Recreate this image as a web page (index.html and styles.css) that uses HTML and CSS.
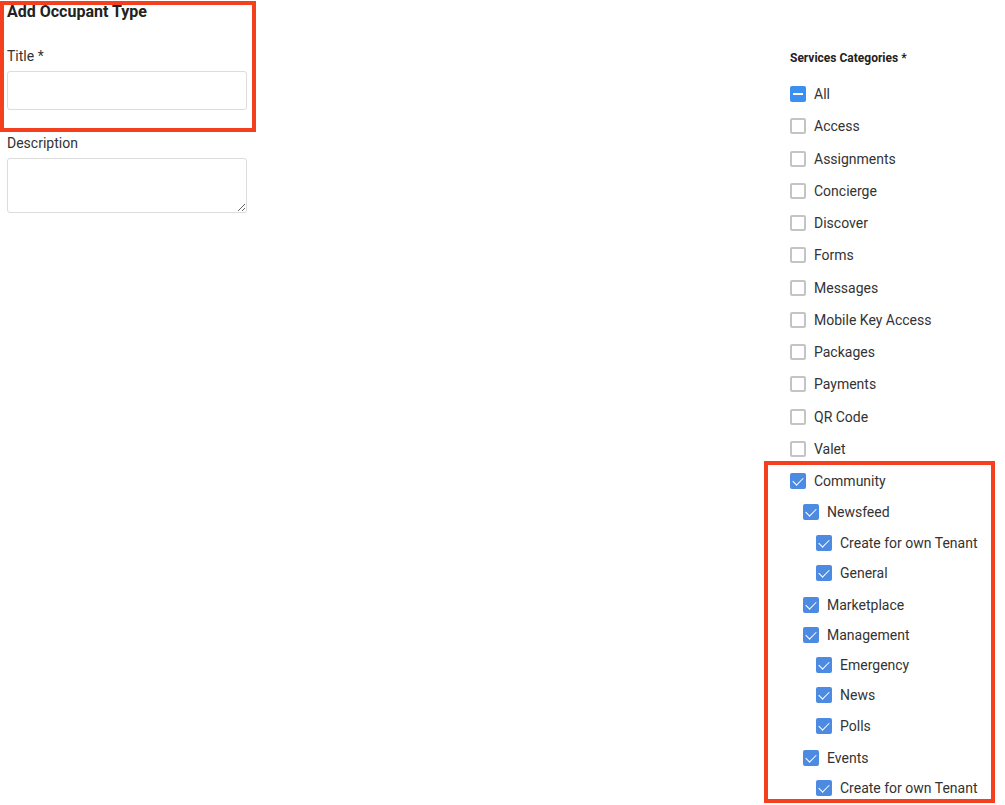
FILE: index.html
```html
<!DOCTYPE html>
<html lang="en">
<head>
    <meta charset="UTF-8">
    <meta name="viewport" content="width=device-width, initial-scale=1.0">
    <title>Add Occupant Type</title>
    <link rel="stylesheet" href="styles.css">
</head>
<body>
    <div class="page">
        <div class="form">
            <h1 class="title">Add Occupant Type</h1>
            <label class="field-label">Title *</label>
            <input type="text" class="input">
            <label class="field-label desc-label">Description</label>
            <textarea class="textarea"></textarea>
        </div>

        <div class="services">
            <div class="services-title">Services Categories *</div>
            <ul class="tree">
                <li class="row"><span class="box partial"></span>All</li>
                <li class="row"><span class="box"></span>Access</li>
                <li class="row"><span class="box"></span>Assignments</li>
                <li class="row"><span class="box"></span>Concierge</li>
                <li class="row"><span class="box"></span>Discover</li>
                <li class="row"><span class="box"></span>Forms</li>
                <li class="row"><span class="box"></span>Messages</li>
                <li class="row"><span class="box"></span>Mobile Key Access</li>
                <li class="row"><span class="box"></span>Packages</li>
                <li class="row"><span class="box"></span>Payments</li>
                <li class="row"><span class="box"></span>QR Code</li>
                <li class="row"><span class="box"></span>Valet</li>
                <li class="row"><span class="box checked"></span>Community</li>
                <li>
                    <ul class="sub">
                        <li class="row sm"><span class="box checked"></span>Newsfeed</li>
                        <li>
                            <ul class="sub">
                                <li class="row sm"><span class="box checked"></span>Create for own Tenant</li>
                                <li class="row sm"><span class="box checked"></span>General</li>
                            </ul>
                        </li>
                        <li class="row sm"><span class="box checked"></span>Marketplace</li>
                        <li class="row sm"><span class="box checked"></span>Management</li>
                        <li>
                            <ul class="sub">
                                <li class="row sm"><span class="box checked"></span>Emergency</li>
                                <li class="row sm"><span class="box checked"></span>News</li>
                                <li class="row sm"><span class="box checked"></span>Polls</li>
                            </ul>
                        </li>
                        <li class="row sm"><span class="box checked"></span>Events</li>
                        <li>
                            <ul class="sub">
                                <li class="row sm"><span class="box checked"></span>Create for own Tenant</li>
                            </ul>
                        </li>
                    </ul>
                </li>
            </ul>
        </div>
    </div>

    <!-- annotation frames -->
    <div class="mark mark-form"></div>
    <div class="mark mark-community"></div>
</body>
</html>
```

FILE: styles.css
```css
* {
  margin: 0px;
  padding: 0px;
  box-sizing: border-box;
}

body {
  font-family: Roboto, "Liberation Sans", sans-serif;
  font-size: 14px;
  color: #333;
  background: #fff;
  position: relative;
  height: 805px;
  overflow: hidden;
}

.page {
  display: flex;
  padding-left: 7px;
}

.form {
  width: 240px;
  display: flex;
  flex-direction: column;
}

.title {
  font-size: 16px;
  font-weight: 700;
  color: #222;
  line-height: 18px;
  margin-top: 3px;
}

.field-label {
  line-height: 18px;
  margin-top: 26px;
  margin-bottom: 6px;
}

.desc-label {
  margin-top: 24px;
  margin-bottom: 6px;
}

.input {
  height: 39px;
  width: 240px;
  border: 1px solid #dcdcdc;
  border-radius: 3px;
}

.textarea {
  height: 55px;
  width: 240px;
  border: 1px solid #dcdcdc;
  border-radius: 3px;
  resize: vertical;
}

.services {
  margin-left: auto;
  width: 215px;
  padding-top: 51px;
}

.services-title {
  font-size: 12px;
  font-weight: 700;
  color: #222;
  line-height: 14px;
  margin-bottom: 13px;
}

.tree,
.sub {
  list-style: none;
}

.sub {
  padding-left: 13px;
  margin-bottom: 2px;
}

.row {
  display: flex;
  align-items: center;
  gap: 8px;
  height: 32.25px;
}

.row.sm {
  height: 30.2px;
}

.box {
  width: 16px;
  height: 16px;
  border: 2px solid #c4c4c4;
  border-radius: 2px;
  background: #fff;
  flex-shrink: 0;
  position: relative;
}

.box.checked {
  border: none;
  background: #4d8be3;
}

.box.checked::after {
  content: "";
  position: absolute;
  left: 5px;
  top: 2px;
  width: 5px;
  height: 9px;
  border-right: 1.5px solid #fff;
  border-bottom: 1.5px solid #fff;
  transform: rotate(45deg);
}

.box.partial {
  border: none;
  background: #3a8ff0;
}

.box.partial::after {
  content: "";
  position: absolute;
  left: 3px;
  top: 7px;
  width: 10px;
  height: 2px;
  background: #fff;
}

.mark {
  position: absolute;
  border: 4px solid #f4401f;
  pointer-events: none;
}

.mark-form {
  left: 0px;
  top: 1px;
  width: 256px;
  height: 131px;
}

.mark-community {
  left: 764px;
  top: 461px;
  width: 231px;
  height: 342px;
}
```
